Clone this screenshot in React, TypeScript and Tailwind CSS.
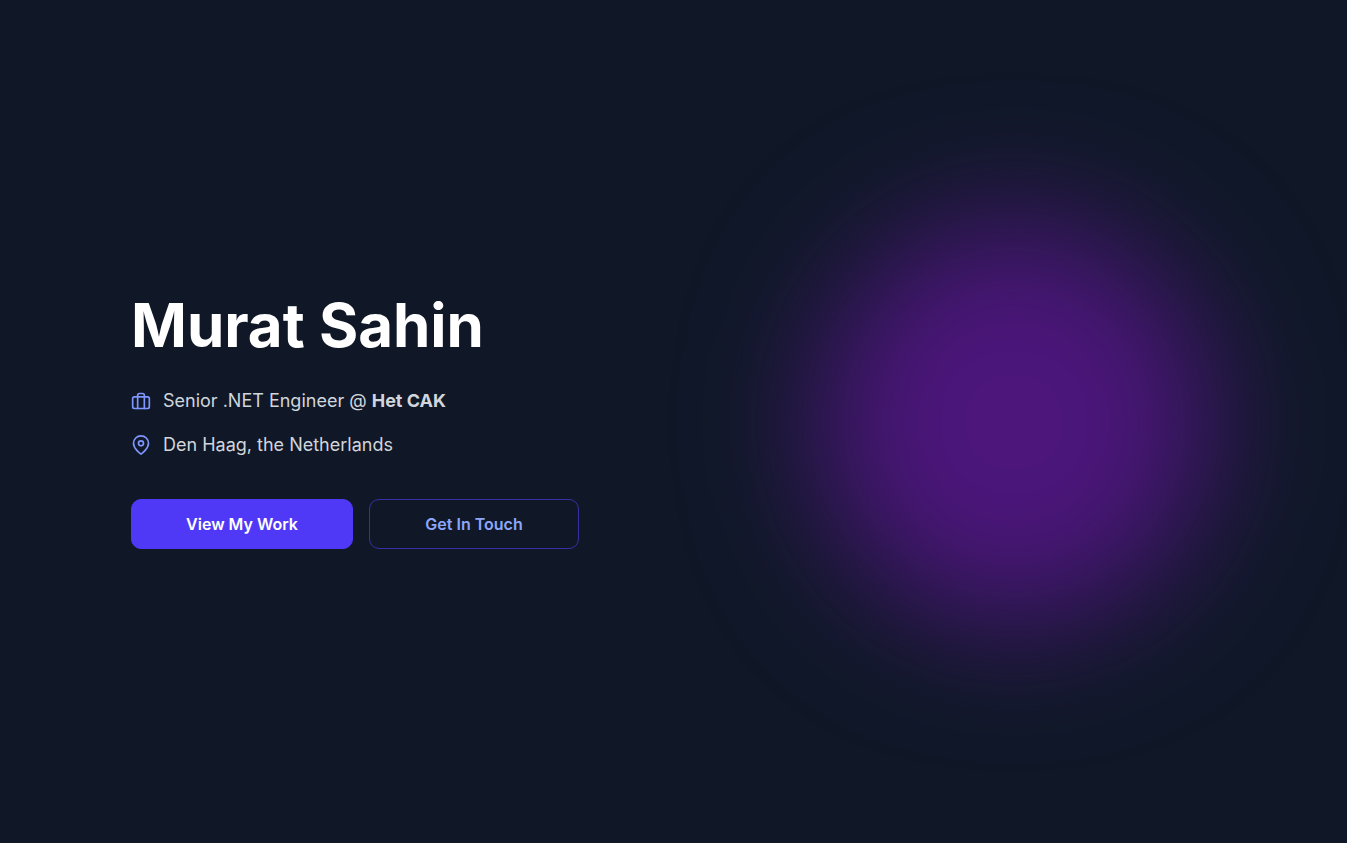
import { FiBriefcase, FiMapPin } from 'react-icons/fi';

export default function App() {
  return (
    <main className="grid min-h-screen grid-cols-2 items-center gap-4 overflow-hidden bg-gray-900 font-['Inter',sans-serif]">
      {/* Intro */}
      <section className="pl-[131px]">
        <h1 className="mb-8 whitespace-nowrap text-6xl font-bold text-white">Murat Sahin</h1>

        <div className="mb-10 flex flex-col gap-4 text-lg text-gray-300">
          <p className="flex items-center gap-3">
            <FiBriefcase className="size-5 shrink-0 text-[#7f96ff]" />
            <span>Senior .NET Engineer @ <strong className="font-bold">Het CAK</strong></span>
          </p>
          <p className="flex items-center gap-3">
            <FiMapPin className="size-5 shrink-0 text-[#7f96ff]" />
            <span>Den Haag, the Netherlands</span>
          </p>
        </div>

        <div className="flex gap-4">
          <a href="#projects" className="w-[222px] shrink-0 rounded-[10px] border border-indigo-600 bg-indigo-600 py-3 text-center font-semibold text-white">
            View My Work
          </a>
          <a href="#contact" className="w-[210px] shrink-0 rounded-[10px] border border-[#3730a3] py-3 text-center font-semibold text-[#8ca6fa]">
            Get In Touch
          </a>
        </div>
      </section>

      {/* Glow */}
      <div className="flex justify-center" aria-hidden="true">
        <div className="h-[404px] w-[392px] rounded-full bg-[#4c167b] blur-3xl" />
      </div>
    </main>
  );
}
